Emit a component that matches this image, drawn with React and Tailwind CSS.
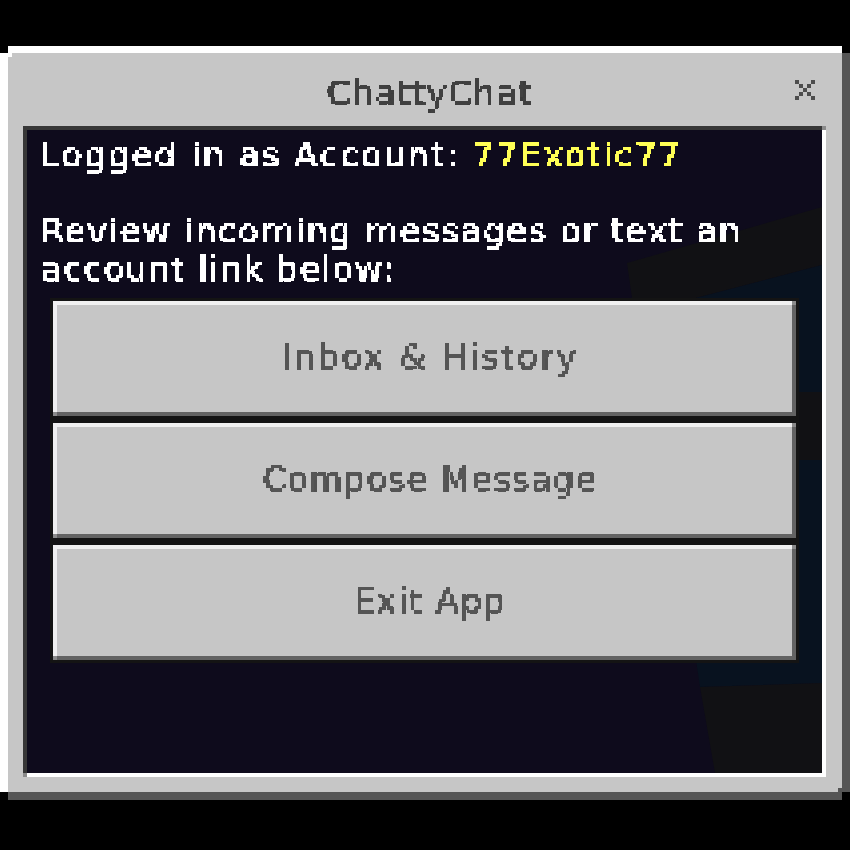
const buttons = [
  { label: 'Inbox & History', spacing: 'tracking-[2.4px]' },
  { label: 'Compose Message', spacing: 'tracking-[1.1px]' },
  { label: 'Exit App', spacing: 'tracking-[1.4px]' },
]

function Corner({ className }) {
  return <span className={`absolute h-1 w-1 bg-[#8b8b8b] ${className}`} />
}

function MenuButton({ label, spacing }) {
  return (
    <button className="relative h-[115px] w-full border-4 border-t-[#f0f0f0] border-l-[#f0f0f0] border-r-[#636363] border-b-[#636363] bg-[#c6c6c6] pb-[4px] pl-[11px] text-[#555555]">
      <span className={`inline-block text-[34px] leading-[46px] [filter:url(#pixel)] ${spacing}`}>{label}</span>
      <Corner className="-right-1 -top-1" />
      <Corner className="-bottom-1 -left-1" />
    </button>
  )
}

export default function App() {
  return (
    <div className="h-[850px] w-[850px] bg-black pt-[46px] font-['DejaVu_Sans',sans-serif]">
      {/* pixelates the text onto a 4px grid */}
      <svg width="0" height="0" className="absolute">
        <filter id="pixel" x="0" y="0" width="100%" height="100%">
          <feFlood x="1" y="1" width="2" height="2" />
          <feComposite width="4" height="4" />
          <feTile result="grid" />
          <feComposite in="SourceGraphic" in2="grid" operator="in" />
          <feMorphology operator="dilate" radius="1" />
          <feComponentTransfer>
            <feFuncA type="discrete" tableValues="0 1 1 1" />
          </feComponentTransfer>
        </filter>
      </svg>

      {/* window frame */}
      <div className="relative h-[754px] w-[850px] border-8 border-t-[7px] border-t-white border-l-white border-r-[#555555] border-b-[#555555] bg-[#c6c6c6]">
        <span className="absolute -left-2 -top-[7px] h-[7px] w-2 bg-black" />
        <span className="absolute -right-2 -top-[7px] h-[7px] w-2 bg-black" />
        <span className="absolute -bottom-2 -left-2 h-2 w-2 bg-black" />
        <span className="absolute -bottom-2 -right-2 h-2 w-2 bg-black" />
        <span className="absolute left-0 top-0 h-1 w-1 bg-white" />
        <span className="absolute bottom-0 right-0 h-1 w-1 bg-[#555555]" />

        <div className="flex h-[73px] items-start justify-between pl-[15px] pr-[27px]">
          <div className="w-full pl-[42px] pt-[17px] text-center text-[34px] leading-[46px] tracking-[1.4px] text-[#404040] [filter:url(#pixel)]">
            ChattyChat
          </div>
          <svg className="mt-[27px] shrink-0" width="20" height="20" viewBox="0 0 20 20" fill="#4d4d4d">
            <rect x="0" y="0" width="4" height="4" />
            <rect x="16" y="0" width="4" height="4" />
            <rect x="4" y="4" width="4" height="4" />
            <rect x="12" y="4" width="4" height="4" />
            <rect x="8" y="8" width="4" height="4" />
            <rect x="4" y="12" width="4" height="4" />
            <rect x="12" y="12" width="4" height="4" />
            <rect x="0" y="16" width="4" height="4" />
            <rect x="16" y="16" width="4" height="4" />
          </svg>
        </div>

        {/* content panel */}
        <div className="relative mx-[15px] h-[651px] w-[803px] border-4 border-t-[#373737] border-l-[#373737] border-r-white border-b-white bg-[#0e0b1c]">
          <svg className="absolute inset-0" width="795" height="643" viewBox="27 130 795 643">
            <polygon points="627,263 822,207 822,265 696,298 632,298" fill="#111114" />
            <polygon points="696,298 822,265 822,392 799,392 799,298" fill="#08121f" />
            <polygon points="799,392 822,392 822,460 799,460" fill="#111114" />
            <polygon points="799,460 822,460 822,683 700,687 696,660 799,660" fill="#08121f" />
            <polygon points="700,687 822,683 822,773 715,773" fill="#111114" />
          </svg>
          <div className="relative pl-[14px] pt-[6px] text-[34px] leading-[38px] text-white [filter:url(#pixel)]">
            <div className="tracking-[2.05px]">
              Logged in as Account: <span className="text-[#ffff55]">77Exotic77</span>
            </div>
            <div className="mt-[38px] tracking-[1.55px]">Review incoming messages or text an</div>
            <div className="tracking-[1.4px]">account link below:</div>
          </div>
          <div className="absolute left-[23px] top-[168px] flex w-[749px] flex-col gap-[1px] bg-[#141414] p-[3px]">
            {buttons.map((button, i) => (
              <div key={button.label} className={i > 0 ? 'mt-[6px]' : ''}>
                <MenuButton label={button.label} spacing={button.spacing} />
              </div>
            ))}
          </div>
          <Corner className="-right-1 -top-1" />
          <Corner className="-bottom-1 -left-1" />
        </div>
      </div>
    </div>
  )
}
